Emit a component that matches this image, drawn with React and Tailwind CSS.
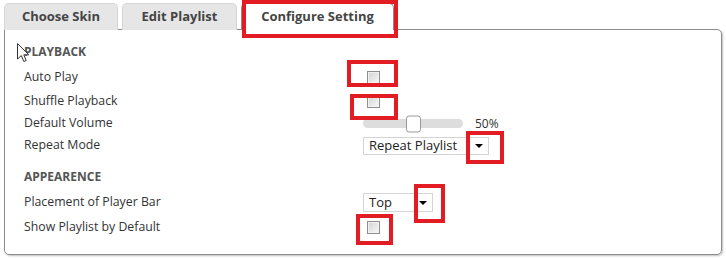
import React from 'react';

const Checkbox = () => (
  <span className="ml-[4px] block w-[13px] h-[13px] border border-[#8f8f8f] bg-gradient-to-br from-[#d4d4d4] to-[#f8f8f8] shadow-[inset_0_0_0_1px_#f2f2f2]" />
);

const Select = ({ value, width }) => (
  <div className={`relative flex items-center border border-[#d4d4d4] bg-white pl-[5px] text-[13px] text-[#222] ${width}`}>
    <span className="leading-none">{value}</span>
    <span className="absolute right-[5px] top-1/2 -translate-y-1/2 w-0 h-0 border-l-[4px] border-r-[4px] border-t-[4px] border-l-transparent border-r-transparent border-t-black" />
  </div>
);

const Row = ({ label, h, className = '', children }) => (
  <div className={`grid grid-cols-[339px_1fr] items-center ${h} ${className}`}>
    <div className="text-[12.3px] text-[#333]">{label}</div>
    <div className="flex items-center">{children}</div>
  </div>
);

const RedBox = ({ className }) => (
  <div className={`absolute border-[4px] border-[#e31b23] ${className}`} />
);

const App = () => {
  return (
    <div className="relative w-[726px] h-[259px] bg-white font-['Open_Sans',sans-serif] overflow-hidden">
      <div className="flex gap-[4px] pl-[4px] pt-[3px] relative z-10">
        <div className="w-[114px] h-[27px] flex items-center justify-center rounded-t-[5px] border border-b-0 border-[#d6d6d6] bg-[#e6e6e6] text-[13px] font-bold text-[#444]">
          Choose Skin
        </div>
        <div className="w-[115px] h-[27px] flex items-center justify-center rounded-t-[5px] border border-b-0 border-[#d6d6d6] bg-[#e6e6e6] text-[13px] font-bold text-[#444]">
          Edit Playlist
        </div>
        <div className="w-[153px] h-[27px] -mb-px flex items-center justify-center rounded-t-[5px] border border-b-0 border-[#8c8c8c] bg-white text-[13px] font-bold text-[#444]">
          Configure Setting
        </div>
      </div>

      <div className="-mt-px mx-[4px] h-[226px] border border-[#8c8c8c] rounded-b-[5px] rounded-tr-[5px] shadow-[1px_1px_2px_rgba(0,0,0,0.25)] pl-[19px] pt-[14px]">
        <div className="h-[16px] flex items-center text-[12px] font-bold text-[#555] uppercase">Playback</div>
        <Row label="Auto Play" h="h-[23px]" className="mt-[6px]">
          <Checkbox />
        </Row>
        <Row label="Shuffle Playback" h="h-[25px]">
          <Checkbox />
        </Row>
        <Row label="Default Volume" h="h-[19px]">
          <div className="relative w-[100px] h-[9px] rounded-full bg-[#dddddd]">
            <span className="absolute left-[43px] top-1/2 -translate-y-1/2 w-[15px] h-[17px] rounded-[3px] border border-[#999] bg-white" />
          </div>
          <span className="ml-[12px] text-[12px] text-[#333]">50%</span>
        </Row>
        <Row label="Repeat Mode" h="h-[25px]">
          <Select value="Repeat Playlist" width="w-[126px] h-[18px]" />
        </Row>
        <div className="mt-[11px] h-[16px] flex items-center text-[12px] font-bold text-[#555] uppercase">Appearence</div>
        <Row label="Placement of Player Bar" h="h-[25px]" className="mt-[5px]">
          <Select value="Top" width="w-[70px] h-[19px]" />
        </Row>
        <Row label="Show Playlist by Default" h="h-[24px]">
          <Checkbox />
        </Row>
      </div>

      <svg className="absolute left-[17px] top-[43px] z-20" width="13" height="20" viewBox="0 0 13 20">
        <path d="M0.5 0.5 L0.5 16 L4.3 12.6 L6.8 18.5 L9.2 17.5 L6.8 11.8 L11.8 11.8 Z" fill="white" stroke="#333" strokeWidth="1" strokeLinejoin="round" />
      </svg>

      <RedBox className="left-[242px] top-0 w-[156px] h-[38px] z-20" />
      <RedBox className="left-[347px] top-[60px] w-[51px] h-[27px]" />
      <RedBox className="left-[350px] top-[94px] w-[48px] h-[26px]" />
      <RedBox className="left-[466px] top-[131px] w-[38px] h-[33px]" />
      <RedBox className="left-[414px] top-[184px] w-[31px] h-[39px]" />
      <RedBox className="left-[356px] top-[214px] w-[37px] h-[31px]" />
    </div>
  );
};

export default App;
